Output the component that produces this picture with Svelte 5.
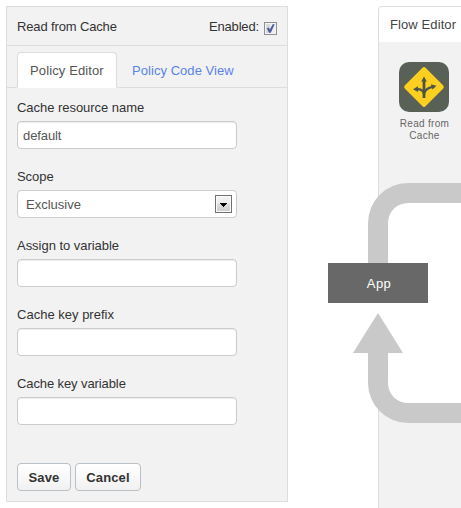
<script>
  let enabled = $state(true);
  const fields = [
    { label: 'Cache resource name', value: 'default', spacing: -0.04 },
    { label: 'Scope', value: 'Exclusive', select: true, spacing: -0.05 },
    { label: 'Assign to variable', value: '', spacing: -0.03 },
    { label: 'Cache key prefix', value: '', spacing: 0.01 },
    { label: 'Cache key variable', value: '', spacing: -0.1 }
  ];
</script>

<main>
  <section class="policy">
    <header>
      <span class="title">Read from Cache</span>
      <button class="enabled" onclick={() => (enabled = !enabled)}>
        <span>Enabled:</span>
        <svg width="13" height="13" viewBox="0 0 13 13">
          <rect x=".5" y=".5" width="12" height="12" fill="#f4f4f4" stroke="#8e8f8f" />
          <rect x="2" y="2" width="9" height="9" fill="#d6dade" />
          <path d="M6 2h5v9H6z" fill="#eceef0" />
          {#if enabled}<path d="M2.8 6.2 4.8 5.4 5.8 7.6 8.7 2.2h2L6.8 10.7H5Z" fill="#4a5f97" />{/if}
        </svg>
      </button>
    </header>
    <nav>
      <span class="tab active">Policy Editor</span>
      <span class="tab">Policy Code View</span>
    </nav>
    <form onsubmit={(e) => e.preventDefault()}>
      {#each fields as f}
        <label>
          <span class="name" style="letter-spacing: {f.spacing}px">{f.label}</span>
          {#if f.select}
            <span class="control select">
              <span>{f.value}</span>
              <svg width="17" height="18" viewBox="0 0 17 18">
                <defs><linearGradient id="g" x1="0" y1="0" x2="0" y2="1"><stop offset="0" stop-color="#f3f3f3" /><stop offset=".5" stop-color="#ebebeb" /><stop offset=".5" stop-color="#dddddd" /><stop offset="1" stop-color="#cfcfcf" /></linearGradient></defs>
                <rect x=".5" y=".5" width="16" height="17" fill="#fbfbfb" stroke="#707070" />
                <rect x="2" y="2" width="13" height="14" fill="url(#g)" />
                <path d="M5 8h7v1h-1v1h-1v1H9v1H8v-1H7v-1H6V9H5z" fill="#000" />
              </svg>
            </span>
          {:else}
            <input class="control" type="text" value={f.value} />
          {/if}
        </label>
      {/each}
      <div class="actions">
        <button class="save">Save</button>
        <button class="cancel">Cancel</button>
      </div>
    </form>
  </section>

  <section class="flow">
    <header>Flow Editor</header>
    <figure>
      <svg width="50" height="50" viewBox="0 0 50 50">
        <rect width="50" height="50" rx="10" fill="#596157" />
        <rect x="10.3" y="10.3" width="29.4" height="29.4" rx="2.5" fill="#fccf20" transform="rotate(45 25 25)" />
        <g fill="none" stroke="#4d5548" stroke-width="2.2">
          <path d="M25 36V18" stroke-width="2.8" />
          <path d="M25 32C24.5 28.6 22.5 27.2 18 27.2" />
          <path d="M25 32C25.5 28 28 26.3 33.5 24.9" />
        </g>
        <path d="M25 14.5 27.8 19.5h-5.6zM14 27.2l5-2.9v5.8zM37.5 23.8l-5.7-1.6 1.7 5.4z" fill="#4d5548" />
      </svg>
      <figcaption>Read from<br />Cache</figcaption>
    </figure>
  </section>

  <svg class="loop" width="133" height="240" viewBox="328 183 133 240">
    <path d="M388 303V223Q388 203 408 203H461V403H408Q388 403 388 383V303Z" fill="#fff" />
    <rect x="368" y="303" width="20" height="50" fill="#fff" />
    <path d="M461 183H408A40 40 0 0 0 368 223V263H388V223A20 20 0 0 1 408 203H461Z" fill="#c9c9c9" />
    <path d="M378 313 403 353H388V383A20 20 0 0 0 408 403H461V423H408A40 40 0 0 1 368 383V353H353Z" fill="#c9c9c9" />
  </svg>
  <div class="app">App</div>
</main>

<style>
  :global(body) { background: #fff; }
  main {
    position: relative; display: flex; gap: 90px; width: 461px; height: 508px;
    padding: 6px 0 0 6px; box-sizing: border-box; overflow: hidden;
    font: 13px/20px "Liberation Sans", Arial, sans-serif; color: #333;
  }
  section { box-sizing: border-box; background: #f2f2f2; }
  .policy { flex: none; width: 282px; height: 496px; border: 1px solid #ddd; }
  .policy header {
    display: flex; justify-content: space-between; height: 38px; padding: 0 10px;
    align-items: center; border-bottom: 1px solid #ddd;
  }
  .title { padding-top: 2px; letter-spacing: -.14px; }
  button { font: inherit; color: inherit; }
  .enabled { display: flex; gap: 5px; align-items: center; border: 0; padding: 0; background: none; letter-spacing: -.15px; }
  .enabled span { padding-top: 2px; }
  .enabled svg { margin-top: 4px; }
  nav { display: flex; height: 41px; padding-left: 10px; align-items: flex-end; border-bottom: 1px solid #ddd; }
  .tab { box-sizing: border-box; height: 35px; padding: 8px 14px 0; border: 1px solid transparent; color: #5a82e8; letter-spacing: .05px; white-space: nowrap; }
  .tab.active {
    width: 100px; height: 36px; margin-bottom: -1px; padding: 8px 0 0 12px; border-color: #ddd #ddd #fff;
    border-radius: 4px 4px 0 0; background: #fff; color: #555; letter-spacing: .12px;
  }
  form { padding: 9px 10px 0; }
  label { display: flex; flex-direction: column; gap: 4px; height: 69px; }
  .name { box-sizing: border-box; height: 20px; padding-top: 1px; }
  .control {
    box-sizing: border-box; width: 220px; height: 28px; padding: 0 5px; border: 1px solid #ccc;
    border-radius: 4px; background: #fff; box-shadow: inset 0 1px 1px rgba(0,0,0,.075);
    font: 13px/20px "Liberation Sans", Arial, sans-serif; color: #555; outline: 0; letter-spacing: -.1px;
  }
  .select { display: flex; justify-content: space-between; align-items: center; padding: 0 4px 0 8px; letter-spacing: 0; box-shadow: none; }
  .select span { padding-top: 2px; }
  .actions { display: flex; gap: 4px; margin-top: 21px; }
  .actions button {
    box-sizing: border-box; height: 28px; padding: 1px 0 0; border: 1px solid #b9c1c6; border-radius: 4px;
    background: linear-gradient(#fff, #f1f1f1); font-weight: bold; letter-spacing: .15px;
  }
  .save { width: 54px; }
  .cancel { width: 66px; }
  .flow { flex: 1; height: 510px; border: 1px solid #ddd; border-width: 1px 0 0 1px; border-radius: 4px 0 0 0; }
  .flow header { height: 35px; padding-left: 11px; border-radius: 3px 0 0; background: #fff; line-height: 35px; color: #444; letter-spacing: .1px; white-space: nowrap; }
  figure { width: 70px; margin: 20px 0 0 10px; text-align: center; }
  figure svg { display: block; margin: 0 auto; }
  figcaption { margin-top: 6px; padding-left: 1px; font-size: 10px; line-height: 12px; color: #666; letter-spacing: .3px; }
  .loop { position: absolute; left: 328px; top: 183px; }
  .app { position: absolute; left: 328px; top: 263px; width: 100px; height: 40px; background: #686868; color: #fff; text-align: center; line-height: 41px; padding-left: 2px; box-sizing: border-box; letter-spacing: .4px; }
</style>
